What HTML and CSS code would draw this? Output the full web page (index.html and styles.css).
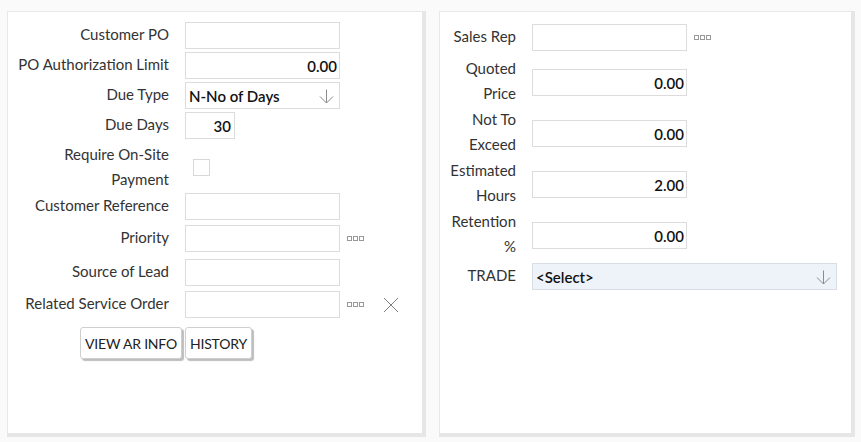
FILE: index.html
```html
<!DOCTYPE html>
<html>
<head>
<meta charset="utf-8">
<link rel="stylesheet" href="styles.css">
</head>
<body>
<div class="page">
  <section class="panel panel-left">
    <div class="form form-left">
      <label class="lbl">Customer PO</label>
      <div class="field"><div class="input"></div></div>

      <label class="lbl">PO Authorization Limit</label>
      <div class="field"><div class="input num">0.00</div></div>

      <label class="lbl">Due Type</label>
      <div class="field"><div class="input select"><span>N-No of Days</span>
        <svg class="arrow" width="15" height="15" viewBox="0 0 15 15"><path d="M7.5 0.5 V14 M1 7.5 L7.5 14 L14 7.5" fill="none" stroke="#8a8a8a" stroke-width="1"/></svg></div></div>

      <label class="lbl">Due Days</label>
      <div class="field"><div class="input num short">30</div></div>

      <label class="lbl two">Require On-Site Payment</label>
      <div class="field center"><div class="check"></div></div>

      <label class="lbl">Customer Reference</label>
      <div class="field"><div class="input"></div></div>

      <label class="lbl">Priority</label>
      <div class="field"><div class="input"></div>
        <svg class="dots" width="18" height="6" viewBox="0 0 18 6"><rect x="0.5" y="0.5" width="4" height="4" fill="none" stroke="#999"/><rect x="6.5" y="0.5" width="4" height="4" fill="none" stroke="#999"/><rect x="12.5" y="0.5" width="4" height="4" fill="none" stroke="#999"/></svg></div>

      <label class="lbl">Source of Lead</label>
      <div class="field"><div class="input"></div></div>

      <label class="lbl">Related Service Order</label>
      <div class="field"><div class="input"></div>
        <svg class="dots" width="18" height="6" viewBox="0 0 18 6"><rect x="0.5" y="0.5" width="4" height="4" fill="none" stroke="#999"/><rect x="6.5" y="0.5" width="4" height="4" fill="none" stroke="#999"/><rect x="12.5" y="0.5" width="4" height="4" fill="none" stroke="#999"/></svg>
        <svg class="clear" width="16" height="16" viewBox="0 0 16 16"><path d="M1 1 L15 15 M15 1 L1 15" stroke="#808080" stroke-width="1" fill="none"/></svg></div>
    </div>
    <div class="buttons">
      <button class="btn">VIEW AR INFO</button>
      <button class="btn">HISTORY</button>
    </div>
  </section>

  <section class="panel panel-right">
    <div class="form form-right">
      <label class="lbl">Sales Rep</label>
      <div class="field"><div class="input"></div>
        <svg class="dots" width="18" height="6" viewBox="0 0 18 6"><rect x="0.5" y="0.5" width="4" height="4" fill="none" stroke="#999"/><rect x="6.5" y="0.5" width="4" height="4" fill="none" stroke="#999"/><rect x="12.5" y="0.5" width="4" height="4" fill="none" stroke="#999"/></svg></div>

      <label class="lbl two">Quoted Price</label>
      <div class="field center"><div class="input num">0.00</div></div>

      <label class="lbl two">Not To Exceed</label>
      <div class="field center"><div class="input num">0.00</div></div>

      <label class="lbl two">Estimated Hours</label>
      <div class="field center"><div class="input num">2.00</div></div>

      <label class="lbl two">Retention %</label>
      <div class="field center"><div class="input num">0.00</div></div>

      <label class="lbl trade-lbl">TRADE</label>
      <div class="field trade-field"><div class="input select wide"><span>&lt;Select&gt;</span>
        <svg class="arrow" width="15" height="15" viewBox="0 0 15 15"><path d="M7.5 0.5 V14 M1 7.5 L7.5 14 L14 7.5" fill="none" stroke="#8a8a8a" stroke-width="1"/></svg></div></div>
    </div>
  </section>
</div>
</body>
</html>
```
FILE: styles.css
```css
* { box-sizing: border-box; }
html, body { margin: 0; padding: 0; }
body {
  background: #fafafa;
  font-family: Lato, "Open Sans", sans-serif;
  font-size: 15px;
  color: #333;
  width: 861px;
  height: 442px;
  overflow: hidden;
}
.page {
  display: flex;
  gap: 13px;
  padding: 11px 0 0 7px;
}
.panel {
  background: #fff;
  border: 1px solid #e8e8e8;
  border-right: 4px solid #e6e6e6;
  border-bottom: 4px solid #e6e6e6;
  height: 426px;
}
.panel-left { width: 419px; padding: 10px 0 0 7px; }
.panel-right { width: 416px; padding: 12px 0 0 6px; }

.form {
  display: grid;
  column-gap: 16px;
  align-items: start;
}
.form-left {
  grid-template-columns: 154px auto;
  grid-template-rows: 30px 30px 30px 30px 51px 32px 34px 32px 36px;
}
.form-right {
  grid-template-columns: 70px auto;
  grid-template-rows: 33px 51px 51px 51px 51px 30px;
}
.lbl {
  text-align: right;
  line-height: 25px;
  white-space: normal;
}
.lbl.two { line-height: 25px; height: 50px; }
.form-left .lbl.two { line-height: 24.5px; }
.form-right .lbl.two { margin-top: -1px; }
.field {
  display: flex;
  align-items: center;
  height: 27px;
}
.field.center { align-self: center; }
.form-left .field.center { height: 49px; padding-left: 8px; }
.input {
  width: 155px;
  height: 27px;
  border: 1px solid #dcdcdc;
  background: #fff;
  display: flex;
  align-items: center;
  padding: 0 2px;
  font-weight: 600;
  color: #111;
}
.input.num { justify-content: flex-end; }
.input.short { width: 50px; padding-right: 3px; }
.input.select { justify-content: space-between; padding: 0 5px 0 3px; }
.input.select .arrow { margin-top: 2px; }
.input.wide {
  width: 305px;
  background: #eef2f9;
  border-color: #d8dde6;
}
.trade-lbl { margin-top: 2px; }
.trade-field { margin-top: 2px; }
.check {
  width: 17px;
  height: 17px;
  border: 1px solid #d8d8d8;
  background: #fff;
}
.dots { margin-left: 7px; margin-top: 1px; }
.clear { margin-left: 18px; }

.buttons {
  display: flex;
  gap: 3px;
  padding-left: 65px;
}
.btn {
  font-family: Lato, "Open Sans", sans-serif;
  font-size: 14px;
  letter-spacing: -0.2px;
  color: #222;
  background: #fff;
  border: 1px solid #cfcfcf;
  border-radius: 3px;
  box-shadow: 2px 2px 1px #bdbdbd;
  height: 32px;
  padding: 0 4px;
  cursor: pointer;
}
```
